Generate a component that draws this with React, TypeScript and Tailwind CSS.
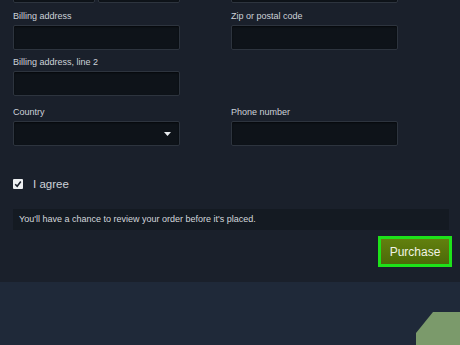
const fieldLabel = "h-[12px] text-[9px] leading-[12px] text-[#cdd2d9]";
const inputBox =
  "h-[25px] w-full rounded-[2px] border border-[#2d343e] bg-[#0e1319] shadow-[inset_0_1px_2px_rgba(0,0,0,0.6)]";

function Field({ label, select }: { label: string; select?: boolean }) {
  return (
    <div className="flex flex-col gap-[3px]">
      <div className={fieldLabel}>{label}</div>
      <div className={`${inputBox} flex items-center justify-end pr-[8px]`}>
        {select ? (
          <svg width="7" height="4" viewBox="0 0 7 4">
            <polygon points="0,0 7,0 3.5,4" fill="#e9ecef" />
          </svg>
        ) : null}
      </div>
    </div>
  );
}

export default function App() {
  return (
    <div
      className="flex h-[345px] w-[460px] flex-col overflow-hidden bg-[#1f2939]"
      style={{ fontFamily: '"Liberation Sans", Arial, sans-serif' }}
    >
      <div className="flex h-[282px] flex-col bg-[#1a202b] pl-[13px] pr-[8px]">
        <div className="mt-[-22px] grid grid-cols-[167px_167px] gap-x-[51px]">
          <div className="flex gap-[3px]">
            <div className={inputBox} />
            <div className={inputBox} />
          </div>
          <div className={inputBox} />
        </div>

        <div className="mt-[7px] grid grid-cols-[167px_167px] gap-x-[51px] gap-y-[6px]">
          <Field label="Billing address" />
          <Field label="Zip or postal code" />
          <Field label="Billing address, line 2" />
          <div />
        </div>

        <div className="mt-[10px] grid grid-cols-[167px_167px] gap-x-[51px]">
          <Field label="Country" select />
          <Field label="Phone number" />
        </div>

        <div className="mt-[33px] flex h-[10px] items-center gap-[10px]">
          <div className="flex h-[10px] w-[10px] items-center justify-center rounded-[1px] bg-[#eef0f2]">
            <svg width="8" height="8" viewBox="0 0 8 8">
              <path d="M1.2 4.2 L3.2 6.2 L6.8 1.6" stroke="#1a202b" strokeWidth="1.6" fill="none" />
            </svg>
          </div>
          <span className="text-[11.5px] leading-[12px] text-[#cdd2d9]">I agree</span>
        </div>

        <div className="mr-[3px] mt-[20px] flex h-[21px] items-center bg-[#141a22] px-[6px] text-[9px] text-[#d3d7dc]">
          You'll have a chance to review your order before it's placed.
        </div>

        <div className="mt-[6px] flex justify-end">
          <button className="h-[31px] w-[74px] border-[3px] border-[#1ee21a] bg-gradient-to-b from-[#62800f] to-[#4c6a08] text-[12px] text-[#f1f3e6]">
            Purchase
          </button>
        </div>
      </div>

      <div className="flex flex-1 items-end justify-end">
        <svg width="44" height="33" viewBox="0 0 44 33">
          <polygon points="0,21 17,0 44,0 44,33 0,33" fill="#7b9a6b" />
        </svg>
      </div>
    </div>
  );
}
